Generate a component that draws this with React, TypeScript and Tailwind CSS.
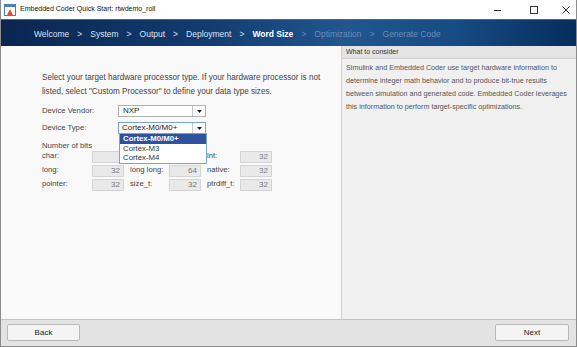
import React from "react";

const pasos = [
  { nombre: "Welcome", estado: "hecho" },
  { nombre: "System", estado: "hecho" },
  { nombre: "Output", estado: "hecho" },
  { nombre: "Deployment", estado: "hecho" },
  { nombre: "Word Size", estado: "actual" },
  { nombre: "Optimization", estado: "pendiente" },
  { nombre: "Generate Code", estado: "pendiente" },
];

function Campo({ valor }: { valor?: string }) {
  return (
    <div className="h-[12px] w-[32px] border border-[#d4d4d4] bg-[#e9e9e9] pr-[3px] text-right text-[8px] leading-[10px] text-[#7a7a7a]">
      {valor}
    </div>
  );
}

function Flecha() {
  return (
    <div className="flex h-full w-[13px] items-center justify-center border-l border-[#c9c9c9]">
      <svg width="5" height="3" viewBox="0 0 5 3">
        <path d="M0 0h5L2.5 3z" fill="#222" />
      </svg>
    </div>
  );
}

export default function App() {
  return (
    <div className="flex h-[347px] w-[577px] flex-col overflow-hidden border-x border-b border-[#8c8c8c] bg-white font-['Liberation_Sans',Arial,sans-serif]">
      {/* barra de título */}
      <div className="flex h-[19px] items-center bg-white">
        <svg width="12" height="12" viewBox="0 0 12 12" className="ml-[3px]">
          <rect x="0.5" y="0.5" width="11" height="11" fill="#fff" stroke="#4a7fb8" />
          <rect x="1" y="1" width="10" height="2" fill="#4a7fb8" />
          <path d="M3 11 L6 5 L9 11 Z" fill="#e0502a" />
        </svg>
        <span className="ml-[4px] text-[7px] text-[#111]">Embedded Coder Quick Start: rtwdemo_roll</span>
        <div className="ml-auto flex items-center">
          <svg width="10" height="10" viewBox="0 0 10 10" className="mr-[26px]">
            <path d="M1 5.5h7" stroke="#333" strokeWidth="1" />
          </svg>
          <svg width="10" height="10" viewBox="0 0 10 10" className="mr-[22px]">
            <rect x="1.5" y="1.5" width="7" height="7" fill="none" stroke="#333" />
          </svg>
          <svg width="10" height="10" viewBox="0 0 10 10" className="mr-[5px]">
            <path d="M1.5 1.5l7 7M8.5 1.5l-7 7" stroke="#333" />
          </svg>
        </div>
      </div>

      {/* pasos del asistente */}
      <div className="flex h-[27px] items-center gap-[8px] border-t border-[#3b6aa3] bg-[linear-gradient(90deg,#0a2650_0%,#123b70_35%,#21568f_60%,#164a82_80%,#062d5c_100%)] pl-[33px] pt-[2px] text-[8.5px]">
        {pasos.map((p, i) => (
          <React.Fragment key={p.nombre}>
            {i > 0 && (
              <span className={p.estado === "pendiente" ? "text-[#6d8cb5]" : "text-[#dbe3ee]"}>&gt;</span>
            )}
            <span
              className={
                p.estado === "actual"
                  ? "font-bold text-white"
                  : p.estado === "pendiente"
                  ? "text-[#6d8cb5]"
                  : "text-[#dbe3ee]"
              }
            >
              {p.nombre}
            </span>
          </React.Fragment>
        ))}
      </div>

      {/* contenido */}
      <div className="flex min-h-0 flex-1">
        <div className="w-[340px] shrink-0 bg-[#f9f9f9] pl-[41px] pt-[25px] text-[7.7px] text-[#444]">
          <p className="whitespace-nowrap text-[8.15px] leading-[14px]">
            Select your target hardware processor type. If your hardware processor is not
            <br />
            listed, select "Custom Processor" to define your data type sizes.
          </p>

          <div className="mt-[6px] flex h-[12px] items-center">
            <span className="w-[76px]">Device Vendor:</span>
            <div className="flex h-[12px] w-[88px] items-center border border-[#b0b0b0] bg-white">
              <span className="flex-1 pl-[4px] text-[8px] text-[#222]">NXP</span>
              <Flecha />
            </div>
          </div>

          <div className="relative mt-[5px] flex h-[12px] items-center">
            <span className="w-[76px]">Device Type:</span>
            <div className="flex h-[12px] w-[88px] items-center border border-[#7aa3d4] bg-white">
              <span className="flex-1 pl-[3px] text-[8px] text-[#222]">Cortex-M0/M0+</span>
              <Flecha />
            </div>
            <div className="absolute left-[77px] top-[11px] z-10 w-[88px] border border-[#7aa3d4] bg-white text-[7.8px] leading-[9.5px]">
              <div className="bg-[#2f52a0] pl-[3px] font-bold text-white">Cortex-M0/M0+</div>
              <div className="pl-[3px] text-[#333]">Cortex-M3</div>
              <div className="pl-[3px] text-[#333]">Cortex-M4</div>
            </div>
          </div>

          <div className="mt-[7px] leading-[10px]">Number of bits</div>
          <div className="grid grid-cols-[50px_32px_45px_32px_39px_32px] gap-y-[2px] whitespace-nowrap [&>span]:leading-[10px]">
            <span>char:</span>
            <Campo />
            <span></span>
            <span></span>
            <span className="pl-[6px]">int:</span>
            <Campo valor="32" />

            <span>long:</span>
            <Campo valor="32" />
            <span className="pl-[6px]">long long:</span>
            <Campo valor="64" />
            <span className="pl-[6px]">native:</span>
            <Campo valor="32" />

            <span>pointer:</span>
            <Campo valor="32" />
            <span className="pl-[6px]">size_t:</span>
            <Campo valor="32" />
            <span className="pl-[6px]">ptrdiff_t:</span>
            <Campo valor="32" />
          </div>
        </div>

        <div className="flex min-w-0 flex-1 flex-col border-l border-[#cfcfcf] bg-[#f0f0f0]">
          <div className="h-[13px] border-b border-[#cdcdcd] bg-[#e4e4e4] pl-[4px] text-[7px] leading-[12px] text-[#333]">
            What to consider
          </div>
          <p className="whitespace-nowrap pl-[4px] pt-[2px] text-[7.2px] leading-[13px] text-[#555]">
            Simulink and Embedded Coder use target hardware information to
            <br />
            determine integer math behavior and to produce bit-true results
            <br />
            between simulation and generated code. Embedded Coder leverages
            <br />
            this information to perform target-specific optimizations.
          </p>
        </div>
      </div>

      {/* pie */}
      <div className="flex h-[27px] items-start justify-between border-t border-[#c4c4c4] bg-[#e3e3e3] pl-[6px] pr-[7px] pt-[4px]">
        <button className="h-[17px] w-[73px] rounded-[2px] border border-[#b9b9b9] bg-[#f4f4f4] text-[8px] text-[#222]">
          Back
        </button>
        <button className="h-[17px] w-[74px] rounded-[2px] border border-[#b9b9b9] bg-[#f4f4f4] text-[8px] text-[#222]">
          Next
        </button>
      </div>
    </div>
  );
}
